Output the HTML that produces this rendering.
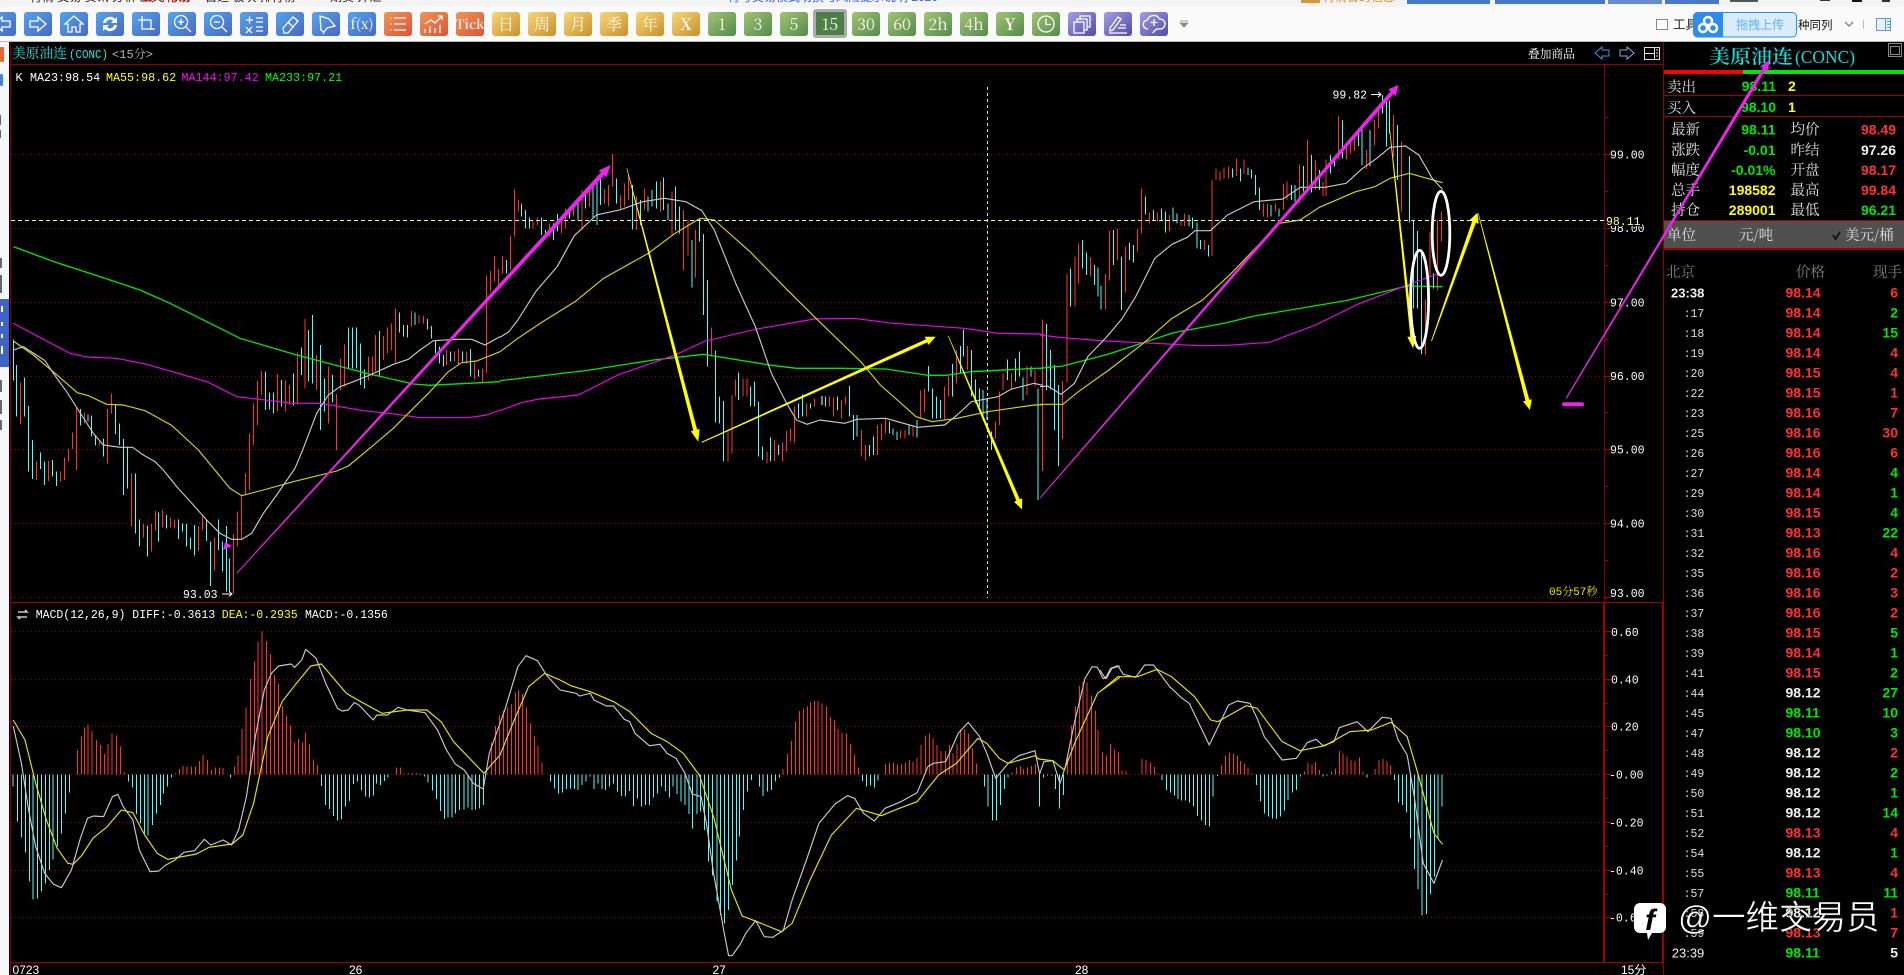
<!DOCTYPE html>
<html lang="zh"><head><meta charset="utf-8"><title>美原油连(CONC)</title>
<style>
html,body{margin:0;padding:0;background:#000;overflow:hidden}
svg{display:block;position:absolute;left:0;top:0}
text{white-space:pre}
.m{font-family:"Liberation Mono","Noto Serif CJK SC",monospace}
.c{font-family:"Noto Serif CJK SC","Liberation Serif",serif}
.s{font-family:"Liberation Sans","Noto Sans CJK SC",sans-serif}
.n{font-family:"Liberation Sans",sans-serif;font-weight:bold;font-size:14px}
.ax{font-family:"Liberation Mono",monospace;font-size:11.5px;fill:#fff}
.b{vector-effect:non-scaling-stroke;stroke-width:1;fill:none;shape-rendering:crispEdges}
.l{vector-effect:non-scaling-stroke;stroke-width:1.15;fill:none;stroke-linejoin:round}
.r{stroke:#ff3232}.k{stroke:#54fcfc}
.fr{fill:#ff3232}.fg{fill:#00e800}.fw{fill:#f0f0f0}.fy{fill:#ffff00}
.ma1{stroke:#c8c8c8}.ma2{stroke:#d6d600}.ma3{stroke:#f000f0}.ma4{stroke:#00e800;stroke-width:1.3}
.ic{fill:none;stroke:#fff;stroke-width:1.3}
.bt{font-family:"Noto Serif CJK SC","Liberation Serif",serif;font-size:16px;text-anchor:middle;fill:#fbf6e8}
.t{font-family:"Liberation Mono",monospace;font-size:11.5px;fill:#ddd;text-anchor:end}
.v{text-anchor:end}
.lb{font-family:"Noto Serif CJK SC",serif;font-size:14.5px;fill:#e0e0e0}
</style></head>
<body>
<svg width="1904" height="975" viewBox="0 0 1904 975" xmlns="http://www.w3.org/2000/svg">
<defs>
<linearGradient id="gb" x1="0" y1="0" x2="1" y2="1"><stop offset="0" stop-color="#52a4f2"/><stop offset="1" stop-color="#4a68bc"/></linearGradient>
<linearGradient id="go" x1="0" y1="0" x2="1" y2="1"><stop offset="0" stop-color="#f09558"/><stop offset="1" stop-color="#dc5436"/></linearGradient>
<linearGradient id="gy" x1="0" y1="0" x2="1" y2="1"><stop offset="0" stop-color="#f8d878"/><stop offset="1" stop-color="#c98f2c"/></linearGradient>
<linearGradient id="gg" x1="0" y1="0" x2="1" y2="1"><stop offset="0" stop-color="#a2c474"/><stop offset="1" stop-color="#558a4e"/></linearGradient>
<linearGradient id="gp" x1="0" y1="0" x2="1" y2="1"><stop offset="0" stop-color="#a49ee4"/><stop offset="1" stop-color="#4e4ca6"/></linearGradient>
</defs>

<!-- chrome -->
<rect width="1904" height="975" fill="#000"/>
<rect width="1904" height="41" fill="#fafafa"/>
<rect width="1904" height="7" fill="#f4f4f4"/>
<rect y="41" width="1904" height="1" fill="#b8b8b8"/>
<g font-size="12" class="s">
<text x="30" y="1" fill="#222">行情 交易 资讯 分析 工具 帮助</text>
<text x="142" y="1" fill="#e00000">实时行情 </text>
<text x="205" y="1" fill="#222">自选 板块 排行榜</text>
<text x="330" y="1" fill="#222">期货 外汇</text>
<text x="728" y="1" fill="#2a62e0">符号交易模式切换与风险提示说明 2020</text>
<text x="1323" y="1" fill="#d88a20">行情合约信息</text>
</g>
<rect x="1301" y="0" width="19" height="3" fill="#d89a40"/>
<rect x="1407" y="0" width="83" height="4" fill="#4a78c8"/>
<rect x="1495" y="0" width="110" height="4" fill="#4a78c8"/>
<rect x="1608" y="0" width="54" height="4" fill="#6a8ad0"/>
<rect x="1665" y="0" width="54" height="4" fill="#4a78c8"/>
<rect x="1730" y="0" width="28" height="2" fill="#555"/>
<rect x="1820" y="0" width="10" height="1" fill="#333"/><rect x="1852" y="0" width="10" height="2" fill="#111"/><rect x="1882" y="0" width="8" height="2" fill="#333"/>

<!-- toolbar buttons -->
<g>
<g transform="translate(-12,12)"><rect width="28" height="24" rx="3" fill="url(#gb)"/><path class="ic" d="M22 9h-8V5l-8 7 8 7v-4h8z"/></g>
<g transform="translate(24,12)"><rect width="28" height="24" rx="3" fill="url(#gb)"/><path class="ic" d="M6 9h8V5l8 7-8 7v-4H6z"/></g>
<g transform="translate(60,12)"><rect width="28" height="24" rx="3" fill="url(#gb)"/><path class="ic" d="M14 4L5 12h3v8h4v-5h4v5h4v-8h3z"/></g>
<g transform="translate(96,12)"><rect width="28" height="24" rx="3" fill="url(#gb)"/><path fill="#fff" d="M7 11a7 7 0 0 1 12-4l2-2v6h-6l2-2a4 4 0 0 0-7 2zM21 13a7 7 0 0 1-12 4l-2 2v-6h6l-2 2a4 4 0 0 0 7-2z"/></g>
<g transform="translate(132,12)"><rect width="28" height="24" rx="3" fill="url(#gb)"/><path class="ic" d="M6 8h13v10M10 4v13h13"/></g>
<g transform="translate(168,12)"><rect width="28" height="24" rx="3" fill="url(#gb)"/><circle class="ic" cx="13" cy="10" r="6.500"/><path class="ic" d="M18 15l5 5M10 10h6M13 7v6"/></g>
<g transform="translate(204,12)"><rect width="28" height="24" rx="3" fill="url(#gb)"/><circle class="ic" cx="13" cy="10" r="6.500"/><path class="ic" d="M18 15l5 5M10 10h6"/></g>
<g transform="translate(240,12)"><rect width="28" height="24" rx="3" fill="url(#gb)"/><path class="ic" d="M6 8h7M9.500 4.500v7M16 6h7M16 10h7M6 15l6 6M12 15l-6 6M16 15h7M16 19h7"/></g>
<g transform="translate(276,12)"><rect width="28" height="24" rx="3" fill="url(#gb)"/><path class="ic" d="M7 16L17 5l5 4-10 12H8zM12 10l5 5"/></g>
<g transform="translate(312,12)"><rect width="28" height="24" rx="3" fill="url(#gb)"/><path class="ic" d="M8 4l9 3 6 7-8 2-3 4-3-2zM11 20l1 2"/></g>
<g transform="translate(348,12)"><rect width="28" height="24" rx="3" fill="url(#gb)"/><text x="14" y="17" font-size="14" class="c" text-anchor="middle" fill="#fff">f(x)</text></g>
<g transform="translate(384,12)"><rect width="28" height="24" rx="3" fill="url(#go)"/><path class="ic" d="M10 6h12M10 12h12M10 18h12M6 6h1.500M6 12h1.500M6 18h1.500"/></g>
<g transform="translate(420,12)"><rect width="28" height="24" rx="3" fill="url(#go)"/><path class="ic" d="M5 21v-4M10 21v-7M15 21v-5M20 21v-8M5 12l6-4 4 3 7-7M18 4h4v4"/></g>
<g transform="translate(456,12)"><rect width="28" height="24" rx="3" fill="url(#go)"/><text x="14" y="17" font-size="13" font-weight="bold" class="c" text-anchor="middle" fill="#f7e6d8">Tick</text></g>
<g transform="translate(492,12)"><rect width="28" height="24" rx="3" fill="url(#gy)"/><text x="14" y="18" class="bt">日</text></g>
<g transform="translate(528,12)"><rect width="28" height="24" rx="3" fill="url(#gy)"/><text x="14" y="18" class="bt">周</text></g>
<g transform="translate(564,12)"><rect width="28" height="24" rx="3" fill="url(#gy)"/><text x="14" y="18" class="bt">月</text></g>
<g transform="translate(600,12)"><rect width="28" height="24" rx="3" fill="url(#gy)"/><text x="14" y="18" class="bt">季</text></g>
<g transform="translate(636,12)"><rect width="28" height="24" rx="3" fill="url(#gy)"/><text x="14" y="18" class="bt">年</text></g>
<g transform="translate(672,12)"><rect width="28" height="24" rx="3" fill="url(#gy)"/><text x="14" y="18" class="bt" font-size="18" font-weight="bold">X</text></g>
<g transform="translate(708,12)"><rect width="28" height="24" rx="3" fill="url(#gg)"/><text x="14" y="18" class="bt">1</text></g>
<g transform="translate(744,12)"><rect width="28" height="24" rx="3" fill="url(#gg)"/><text x="14" y="18" class="bt">3</text></g>
<g transform="translate(780,12)"><rect width="28" height="24" rx="3" fill="url(#gg)"/><text x="14" y="18" class="bt">5</text></g>
<g transform="translate(813,9)"><rect x="0" y="0" width="34" height="29" rx="3" fill="#ababab"/><rect x="3" y="3" width="28" height="23" fill="#4e7f47"/><text x="17" y="21" class="bt">15</text></g>
<g transform="translate(852,12)"><rect width="28" height="24" rx="3" fill="url(#gg)"/><text x="14" y="18" class="bt">30</text></g>
<g transform="translate(888,12)"><rect width="28" height="24" rx="3" fill="url(#gg)"/><text x="14" y="18" class="bt">60</text></g>
<g transform="translate(924,12)"><rect width="28" height="24" rx="3" fill="url(#gg)"/><text x="14" y="18" class="bt">2h</text></g>
<g transform="translate(960,12)"><rect width="28" height="24" rx="3" fill="url(#gg)"/><text x="14" y="18" class="bt">4h</text></g>
<g transform="translate(996,12)"><rect width="28" height="24" rx="3" fill="url(#gg)"/><text x="14" y="18" class="bt" font-size="18" font-weight="bold">Y</text></g>
<g transform="translate(1032,12)"><rect width="28" height="24" rx="3" fill="url(#gg)"/><circle class="ic" cx="14" cy="12" r="8"/><path class="ic" d="M14 6.500v6h5"/></g>
<g transform="translate(1068,12)"><rect width="28" height="24" rx="3" fill="url(#gp)"/><path class="ic" d="M6 10h10v11H6zM9 10V7h10v11h-3M12 7V4h10v11h-3"/></g>
<g transform="translate(1104,12)"><rect width="28" height="24" rx="3" fill="url(#gp)"/><path class="ic" d="M6 16L14 5l3 2-8 11-3 1zM5 21h18M14 16h8M16 13h6"/></g>
<g transform="translate(1140,12)"><rect width="28" height="24" rx="3" fill="url(#gp)"/><path class="ic" d="M8 17a4.500 4.500 0 0 1-.500-9 6.500 6.500 0 0 1 12-1 5 5 0 0 1 1 10h-4l-4 4"/><path class="ic" d="M14 7v7M10.500 10.500h7"/></g>
<path d="M1180 21h8M1180 23h8l-4 4z" fill="#888" stroke="#888" stroke-width=".8"/>
</g>

<!-- right toolbar -->
<rect x="1656.500" y="19.500" width="11" height="10" fill="#fff" stroke="#888"/>
<text x="1673" y="29" font-size="12.500" class="s" fill="#222">工具</text>
<rect x="1693.500" y="12.500" width="103" height="24.500" rx="4" fill="#d8ecfb" stroke="#2d8cf0"/>
<path d="M1697.500 12.500h25.500v24.500h-25.500a4 4 0 0 1-4-4v-16.500a4 4 0 0 1 4-4z" fill="#2d8cf0"/>
<circle cx="1708" cy="21" r="4" fill="none" stroke="#fff" stroke-width="2.500"/><circle cx="1703" cy="28" r="4" fill="none" stroke="#fff" stroke-width="2.500"/><circle cx="1713" cy="28" r="4" fill="none" stroke="#fff" stroke-width="2.500"/>
<text x="1736" y="29" font-size="12" class="s" fill="#6ab0ee">拖拽上传</text>
<text x="1798" y="29" font-size="11.500" class="s" fill="#111">种同列</text>
<path d="M1845 22l4 4 4-4" fill="none" stroke="#888" stroke-width="1.500"/>
<rect x="1863" y="20" width="1" height="9" fill="#bbb"/>
<rect x="1876.500" y="18.500" width="14" height="12" fill="#e8f2fc" stroke="#5a9be0"/><path d="M1885.500 18.500v12M1887 21.500h3M1887 24.500h3M1887 27.500h3" stroke="#5a9be0" fill="none"/>

<!-- left strip -->
<rect x="0" y="42" width="9" height="933" fill="#f5f5fa"/>
<rect x="0" y="47" width="4" height="15" rx="1" fill="#e2683a"/>
<rect x="0" y="74" width="3" height="12" rx="1" fill="#4a80d8"/>
<rect x="0" y="299" width="9" height="68" fill="#3f64c6"/>
<path d="M1 306h2v6H1zM1 322h2v4H1zM1 334h2v4H1zM1 346h2v8H1z" fill="#fff"/>
<path d="M0 258h2v10H0zM0 275h2v18H0zM0 380h2v12H0zM0 400h2v14H0zM0 420h2v10H0zM0 115h1v10H0zM0 130h1v8H0z" fill="#667"/>

<!-- chart frames -->
<g shape-rendering="crispEdges">
<rect x="10" y="42" width="1" height="933" fill="#8a0000"/>
<rect x="10" y="64" width="1654" height="1" fill="#8f0000"/>
<rect x="1604" y="64" width="1" height="538" fill="#800000"/>
<rect x="1663" y="42" width="1" height="933" fill="#900000"/>
<rect x="10" y="602" width="1654" height="1" fill="#a00000"/>
<rect x="10" y="962" width="1654" height="1" fill="#a00000"/>
<rect x="1603" y="602" width="2" height="360" fill="#a00000"/>
<rect x="1662" y="602" width="2" height="360" fill="#a00000"/>
<path d="M11 154.500H1604M11 228.500H1604M11 302.500H1604M11 376.500H1604M11 449.500H1604M11 523.500H1604M11 597.500H1604" stroke="#a00000" stroke-dasharray="1 3" fill="none"/>
<path d="M11 631.500H1603M11 679.500H1603M11 726.500H1603M11 774.500H1603M11 822.500H1603M11 870.500H1603M11 917.500H1603" stroke="#a00000" stroke-dasharray="1 3" fill="none"/>
<path d="M1605 154.500h6M1605 228.500h6M1605 302.500h6M1605 376.500h6M1605 449.500h6M1605 523.500h6M1605 597.500h6M1605 117.500h3M1605 191.500h3M1605 265.500h3M1605 339.500h3M1605 412.500h3M1605 486.500h3M1605 560.500h3" stroke="#a00000" fill="none"/>
<path d="M1605 631.500h6M1605 679.500h6M1605 726.500h6M1605 774.500h6M1605 822.500h6M1605 870.500h6M1605 917.500h6M1605 655.500h3M1605 703.500h3M1605 750.500h3M1605 798.500h3M1605 846.500h3M1605 894.500h3" stroke="#a00000" fill="none"/>
<path d="M987.500 87V598" stroke="#ddd" stroke-dasharray="3 3" fill="none"/>
</g>

<!-- candles part 1 -->
<g transform="translate(0,240) scale(.33333)">
<path class="b k" d="M40 298V422M50 375V530M73 412V530M85 498V695M97 600V717M121 637V687M133 665V735M157 660V710M169 695V738M241 507V557M264 523V545M275 527V590M287 585V617M311 595V650M346 495V582M358 550V615M370 597V765M382 620V745M406 700V880M418 838V920M442 857V950M476 818V905M499 825V865M535 838V897M547 850V875M559 852V920M571 893V927M583 855V947M619 838V903M631 905V1038M655 838V930M667 905V995M679 858V1055M689 955V1055M797 395V510M809 458V508M821 457V520M845 420V500M881 400V497M905 323V405M926 270V425M938 225V430M962 315V570M974 415V515M998 405V487M1046 262V385M1058 262V385M1070 262V385M1082 310V435M1094 388V445M1138 273V410M1199 218V278M1210 255V290M1222 255V293M1245 218V255M1282 237V268M1294 258V295M1306 300V340M1318 320V370M1330 345V380M1352 335V365M1387 335V365M1411 327V410M1435 388V410"/>
<path class="b r" d="M62 427V552M109 665V720M145 663V723M181 695V725M193 652V720M205 627V665M217 578V627M229 503V692M253 517V550M299 605V615M322 507V670M334 460V520M394 700V860M430 852V893M454 852V935M466 813V872M488 810V862M511 833V863M523 838V865M595 858V933M607 825V870M643 893V993M701 882V1060M713 815V920M725 765V900M737 700V765M749 580V750M761 490V615M773 423V555M785 393V465M833 402V515M857 422V515M869 435V495M893 337V490M915 237V445M950 345V450M986 380V550M1010 462V632M1022 355V450M1034 313V440M1106 350V422M1118 350V408M1126 285V395M1150 288V360M1162 262V340M1174 250V330M1187 205V367M1234 213V260M1257 225V250M1270 228V250M1340 330V377M1363 335V365M1375 327V377M1399 335V370M1423 367V418M1447 385V430M1459 107V397M1471 93V155M1483 48V125M1495 87V135"/>
</g>
<!-- candles part 2 -->
<g transform="translate(500,140) scale(.35714,.33333)">
<path class="b k" d="M18 360V400M60 190V230M71 210V265M82 232V265M116 232V285M127 270V290M150 250V300M161 222V275M195 205V235M218 180V240M240 165V205M260 135V235M271 125V255M282 118V195M326 115V190M371 135V268M393 180V255M415 170V215M426 150V200M438 125V205M458 112V210M470 190V240M492 140V272M503 200V280M537 300V443M559 235V305M570 282V525M581 420V680M603 632V848M615 770V850M626 783V965M668 697V780M702 740V800M713 725V800M724 785V950M735 920V960M758 892V965M780 915V945M836 790V835M847 763V830M869 790V805M912 770V800M945 770V810M978 738V830M990 825V900M1000 825V890M1035 915V950M1046 890V945M1090 845V880M1100 865V885M1111 875V900M1145 855V885M1167 840V893M1200 678V755M1211 745V835M1222 770V835M1233 780V835M1267 672V770M1289 618V700M1298 568V650M1320 630V770M1331 718V790M1342 745V800M1353 750V840M1364 775V840M1376 875V930M1421 658V720M1443 655V725M1454 635V710M1465 712V782M1487 680V710M1507 745V1080"/>
<path class="b r" d="M7 348V400M29 288V390M41 148V290M52 180V215M93 243V265M105 232V255M139 250V290M172 240V280M184 205V265M206 190V230M229 150V270M250 140V200M293 147V190M304 135V200M315 42V140M338 165V210M349 130V200M360 105V180M382 170V270M404 145V210M449 125V215M481 155V285M514 210V390M526 240V347M548 270V412M592 562V650M638 870V965M649 765V940M660 718V770M680 715V770M691 715V770M747 935V970M769 900V965M791 908V965M802 873V935M814 865V905M825 800V908M858 790V830M880 775V800M923 770V800M934 772V830M956 780V835M967 770V793M1012 870V950M1023 915V962M1057 855V945M1068 850V900M1079 835V880M1122 872V895M1134 870V895M1156 855V890M1178 752V835M1189 745V815M1245 740V840M1256 710V770M1278 630V730M1309 618V690M1387 845V895M1398 755V855M1409 700V750M1432 700V745M1476 678V765M1498 688V740"/>
<path class="b" stroke="#fff" d="M901 768V795"/>
</g>
<!-- candles part 3 -->
<g transform="translate(1040,70) scale(.38265,.33333)">
<path class="b k" d="M17 762V960M28 840V958M38 885V1080M48 945V1188M80 595V710M111 510V595M122 547V615M143 585V645M152 592V680M160 648V718M192 480V585M213 560V720M234 517V570M245 525V578M276 380V433M296 420V450M317 415V450M328 425V488M348 412V455M358 430V460M389 435V470M399 442V475M410 457V535M420 510V537M440 525V560M503 295V322M524 295V335M543 293V315M553 298V325M563 315V375M574 352V420M604 405V440M625 415V440M657 345V390M667 345V395M688 288V365M709 255V368M730 300V360M759 255V310M769 270V290M790 150V265M832 175V228M842 170V285M863 180V290M895 75V130M905 90V230M913 92V190M934 165V330M966 258V458M976 450V715M986 483V715M997 540V852M1028 610V655"/>
<path class="b r" d="M6 748V1203M59 933V1107M70 612V938M91 560V710M101 520V640M132 562V620M171 612V718M181 482V632M203 475V570M224 530V668M255 477V545M265 355V490M286 428V460M307 428V455M338 435V483M368 450V468M378 430V468M430 510V540M450 330V558M460 295V330M471 305V333M481 292V325M492 290V325M513 265V318M533 268V312M584 400V440M594 402V442M615 400V425M636 342V420M646 335V390M678 283V400M699 210V365M720 270V358M740 335V378M748 268V378M780 138V265M801 228V268M811 205V250M822 190V243M853 240V297M874 150V225M884 120V175M924 135V260M945 215V425M1007 688V855M1019 487V620M1039 450V662M1049 425V515"/>
</g>

<!-- price MAs -->
<g transform="translate(0,240) scale(.33333)">
<polyline class="l ma4" points="40,20 170,68 300,110 420,150 510,190 720,295 890,345 1100,400 1240,432 1290,436 1500,425"/>
<polyline class="l ma3" points="40,250 125,295 210,340 260,351 350,355 440,373 620,425 710,470 880,490 960,490 1090,512 1190,523 1260,533 1405,533 1460,525 1500,510"/>
<polyline class="l ma2" points="40,303 100,345 165,400 232,458 265,467 320,493 370,495 435,512 515,556 595,630 690,745 725,767 790,750 880,725 1010,693 1045,678 1115,620 1180,565 1290,455 1345,395 1385,368 1430,363 1500,335"/>
<polyline class="l ma1" points="40,330 70,320 135,362 160,400 200,455 235,510 280,580 310,615 360,622 398,622 430,645 465,665 490,690 530,740 580,795 620,840 660,880 695,898 725,898 755,880 790,820 830,765 885,685 910,625 950,520 985,465 1020,440 1060,425 1110,405 1180,373 1225,358 1260,330 1300,302 1370,298 1415,298 1455,315 1500,290"/>
</g>
<g transform="translate(500,140) scale(.35714,.33333)">
<polyline class="l ma4" points="0,722 240,692 430,660 570,643 760,676 830,685 950,685 1080,687 1200,706 1250,706 1320,695 1500,685 1520,685"/>
<polyline class="l ma3" points="0,812 60,788 110,777 220,765 330,705 490,645 575,603 720,567 880,537 990,535 1100,550 1300,565 1395,580 1510,582 1520,584"/>
<polyline class="l ma2" points="0,635 50,595 120,545 210,485 290,415 415,340 490,280 560,235 600,240 700,335 800,445 880,530 1010,665 1065,735 1165,830 1210,845 1280,835 1365,815 1495,795 1520,794"/>
<polyline class="l ma1" points="0,592 25,575 50,540 100,455 160,380 208,287 270,225 335,210 400,185 460,175 520,185 565,212 600,270 660,430 715,560 760,700 800,785 830,840 860,853 895,840 965,850 1000,838 1080,835 1170,862 1245,855 1280,825 1320,785 1395,770 1430,748 1495,730 1520,736"/>
</g>
<g transform="translate(1040,70) scale(.38265,.33333)">
<polyline class="l ma4" points="0,895 60,888 180,852 350,788 480,760 560,738 800,692 960,648 1052,650"/>
<polyline class="l ma3" points="0,795 60,803 170,813 300,820 415,827 490,826 600,817 720,765 830,703 960,645 1040,612"/>
<polyline class="l ma2" points="0,1003 60,1003 100,965 180,900 270,820 345,745 425,690 500,610 625,460 680,450 730,412 825,365 875,350 915,325 965,310 1052,338"/>
<polyline class="l ma1" points="0,950 20,948 55,973 90,940 125,860 175,800 215,745 250,680 300,565 345,523 385,502 405,482 445,482 490,435 560,395 635,387 680,352 745,352 800,340 840,298 880,265 915,232 955,228 990,255 1025,325 1052,358"/>
</g>

<!-- MACD histogram -->
<g transform="translate(0,590) scale(.35714,.33333)">
<path class="b k" d="M37 553V590M49 553V695M60 553V743M71 553V788M82 553V875M93 553V928M105 553V925M116 553V905M127 553V880M138 553V840M149 553V808M161 553V770M172 553V730M183 553V670M194 553V608M360 553V575M371 553V592M382 553V672M393 553V700M404 553V730M415 553V737M427 553V705M438 553V670M449 553V645M458 553V610M469 553V590M480 553V563M645 553V563M900 553V588M911 553V645M922 553V657M934 553V678M945 553V692M956 553V687M967 553V650M978 553V633M990 553V582M1001 553V575M1012 553V602M1024 553V620M1035 553V623M1046 553V617M1054 553V580M1065 553V585M1076 553V573M1087 553V563M1177 553V555M1188 553V560M1199 553V578M1211 553V602M1222 553V627M1233 553V663M1245 553V687M1254 553V683M1265 553V682M1276 553V670M1287 553V660M1299 553V658M1310 553V652M1321 553V660M1332 553V658M1343 553V655M1354 553V645M1541 553V575M1552 553V595M1564 553V610"/>
<path class="b r" d="M217 553V480M228 553V440M236 553V413M247 553V403M258 553V423M270 553V450M281 553V465M292 553V492M303 553V462M314 553V430M326 553V437M337 553V470M349 553V547M491 553V550M502 553V537M513 553V528M524 553V530M536 553V530M547 553V530M558 553V513M569 553V495M581 553V510M592 553V540M603 553V532M614 553V532M625 553V534M656 553V530M667 553V497M678 553V417M689 553V353M701 553V267M712 553V213M723 553V155M734 553V125M746 553V155M757 553V192M769 553V255M780 553V282M791 553V348M802 553V378M813 553V407M825 553V457M836 553V447M847 553V458M856 553V428M867 553V462M878 553V508M889 553V525M1110 553V532M1122 553V533M1133 553V550M1144 553V551M1155 553V549M1166 553V549M1365 553V550M1376 553V457M1387 553V408M1398 553V375M1410 553V362M1421 553V352M1432 553V342M1443 553V308M1452 553V300M1463 553V312M1474 553V352M1485 553V400M1496 553V440M1507 553V468M1518 553V517"/>
</g>
<g transform="translate(560,590) scale(.35714,.33333)">
<path class="b k" d="M7 553V608M18 553V597M29 553V595M40 553V597M51 553V600M62 553V585M73 553V575M84 553V560M95 553V597M106 553V580M117 553V597M128 553V600M139 553V590M150 553V580M161 553V605M172 553V618M184 553V620M195 553V603M206 553V648M217 553V625M228 553V650M239 553V645M251 553V645M262 553V622M273 553V610M284 553V590M295 553V603M306 553V622M317 553V590M328 553V612M339 553V635M350 553V645M361 553V672M371 553V716M383 553V672M394 553V665M405 553V720M416 553V815M427 553V857M439 553V935M450 553V975M461 553V1000M472 553V960M483 553V885M494 553V812M503 553V740M514 553V660M525 553V605M536 553V570M558 553V590M569 553V618M581 553V605M592 553V600M603 553V575M614 553V563M847 553V573M858 553V590M869 553V587M880 553V593M891 553V572M1188 553V590M1199 553V650M1211 553V692M1222 553V692M1233 553V645M1244 553V597M1255 553V563M1343 553V650M1354 553V563M1365 553V556M1377 553V556M1388 553V597M1399 553V656M1410 553V615"/>
<path class="b r" d="M625 553V537M637 553V492M648 553V453M659 553V395M670 553V363M682 553V355M693 553V349M701 553V337M712 553V333M723 553V333M734 553V340M746 553V350M757 553V381M768 553V390M779 553V417M790 553V427M802 553V430M813 553V462M824 553V495M836 553V533M911 553V522M922 553V517M934 553V518M945 553V523M956 553V522M967 553V518M978 553V510M989 553V516M1000 553V502M1011 553V465M1023 553V437M1034 553V430M1045 553V445M1056 553V465M1067 553V483M1079 553V483M1090 553V465M1101 553V490M1111 553V460M1122 553V418M1133 553V418M1144 553V430M1155 553V475M1166 553V520M1266 553V547M1278 553V533M1289 553V528M1298 553V537M1309 553V533M1320 553V528M1332 553V522M1421 553V500M1432 553V407M1443 553V348M1454 553V288M1465 553V275M1476 553V277M1488 553V316M1499 553V362M1507 553V420M1519 553V487M1530 553V497M1541 553V462M1552 553V478M1564 553V487"/>
</g>
<g transform="translate(1100,590) scale(.35714,.33333)">
<path class="b k" d="M174 553V570M186 553V600M197 553V607M208 553V617M219 553V627M228 553V632M239 553V632M250 553V637M262 553V650M273 553V678M284 553V692M295 553V705M306 553V710M317 553V620M329 553V558M438 553V585M449 553V635M460 553V670M472 553V680M483 553V685M494 553V687M505 553V680M516 553V662M527 553V630M539 553V607M550 553V600M561 553V560M625 553V560M636 553V556M748 553V563M825 553V570M836 553V638M847 553V645M858 553V668M869 553V745M880 553V837M891 553V897M902 553V977M914 553V972M925 553V912M936 553V860M947 553V745M958 553V650"/>
<path class="b r" d="M62 553V541M73 553V543M118 553V507M129 553V510M141 553V517M152 553V531M163 553V551M340 553V525M351 553V497M362 553V487M374 553V492M385 553V497M393 553V513M404 553V520M415 553V533M426 553V550M572 553V545M583 553V518M594 553V524M603 553V516M614 553V540M648 553V545M659 553V535M670 553V483M681 553V490M692 553V500M703 553V510M714 553V513M726 553V503M737 553V545M770 553V537M781 553V510M792 553V507M803 553V513M814 553V527"/>
</g>

<!-- MACD lines -->
<g transform="translate(0,590) scale(.35714,.33333)">
<polyline class="l ma1" points="37,408 60,520 80,660 100,770 125,850 150,883 172,893 200,840 225,745 245,685 262,678 290,680 315,620 330,613 345,650 372,690 390,780 420,845 445,843 460,828 490,810 515,787 545,782 572,748 590,765 625,750 648,765 668,720 690,620 715,440 740,300 760,250 780,228 815,222 825,232 845,210 856,178 885,205 912,280 945,355 958,363 975,360 992,338 1005,345 1045,390 1055,375 1085,375 1115,352 1140,360 1190,368 1225,420 1250,480 1275,522 1300,540 1325,580 1353,597 1370,490 1415,355 1450,230 1473,197 1505,212 1530,255 1568,300"/>
<polyline class="l" stroke="#e6e600" points="37,390 70,450 100,580 130,690 160,775 190,820 205,823 230,795 260,745 300,710 340,660 372,668 405,735 440,790 470,808 550,792 585,772 650,762 680,735 710,640 750,440 790,335 830,280 870,228 900,222 930,260 970,310 1010,335 1070,370 1140,360 1195,360 1235,395 1270,455 1355,550 1400,495 1440,390 1480,290 1525,250 1568,270"/>
</g>
<g transform="translate(560,590) scale(.35714,.33333)">
<polyline class="l ma1" points="0,300 45,310 55,318 85,310 95,330 130,348 150,348 180,388 195,395 210,430 250,467 280,463 300,490 325,505 350,550 370,612 395,620 410,700 430,850 460,1030 472,1097 482,1097 505,1062 520,1030 548,992 572,1040 595,1042 625,1022 650,930 690,810 725,700 770,642 805,617 825,625 850,670 880,693 910,655 955,635 1000,608 1030,530 1045,520 1080,515 1115,430 1143,397 1175,440 1195,490 1220,565 1255,520 1285,497 1330,482 1343,552 1355,515 1380,512 1400,580 1415,530 1440,400 1470,265 1490,230 1505,232 1520,265 1530,265 1545,235 1568,228"/>
<polyline class="l" stroke="#e6e600" points="0,270 30,287 85,305 150,335 195,365 255,430 300,455 345,490 390,555 430,680 480,900 510,978 545,992 620,1025 650,1000 700,870 760,735 830,655 900,677 950,655 1000,635 1060,555 1110,520 1170,445 1195,460 1230,505 1255,520 1330,497 1340,507 1380,512 1412,540 1445,450 1505,310 1568,262"/>
</g>
<g transform="translate(1100,590) scale(.35714,.33333)">
<polyline class="l ma1" points="0,240 15,265 30,235 50,227 65,253 100,262 125,225 150,225 195,290 230,325 250,340 306,465 360,345 385,333 420,340 440,385 460,440 510,510 550,505 580,458 605,448 625,467 655,455 670,413 720,395 750,425 790,382 815,385 835,450 860,495 880,620 905,820 935,880 959,810"/>
<polyline class="l" stroke="#e6e600" points="0,305 50,260 105,260 160,238 200,260 265,320 310,390 330,395 410,347 440,355 510,455 560,482 630,467 700,425 760,420 815,397 860,440 890,550 935,730 959,763"/>
</g>

<!-- current price line -->
<path d="M11 220.500H1606" stroke="#ffff80" stroke-dasharray="4 3" fill="none" shape-rendering="crispEdges"/>

<!-- chart header text -->
<text x="12" y="58" class="c" font-size="14" fill="#22e8e8" textLength="55" lengthAdjust="spacingAndGlyphs">美原油连</text>
<text x="69" y="58" class="m" font-size="11.500" fill="#22e8e8" textLength="39" lengthAdjust="spacingAndGlyphs">(CONC)</text>
<text x="112" y="58" class="m" font-size="12" fill="#b0b0b0" textLength="41" lengthAdjust="spacingAndGlyphs">&lt;15分&gt;</text>
<g class="m" font-size="11.700">
<text x="15.500" y="81" fill="#fff">K</text>
<text x="30" y="81" fill="#fff">MA23:98.54</text>
<text x="106" y="81" fill="#ffff00">MA55:98.62</text>
<text x="181.500" y="81" fill="#ff00ff">MA144:97.42</text>
<text x="265" y="81" fill="#00ff00">MA233:97.21</text>
</g>
<text x="1528" y="58" class="c" font-size="11.700" fill="#fff">叠加商品</text>
<path d="M1595 53l7-6v3h7v6h-7v3z" fill="#000" stroke="#4a90e0"/>
<path d="M1634 53l-7-6v3h-7v6h7v3z" fill="#000" stroke="#88a8d8"/>
<rect x="1644.500" y="47.500" width="15" height="12" fill="none" stroke="#e0e0e0"/><path d="M1644.500 53.500h10M1654.500 47.500v12M1656 50h2M1656 53h2M1656 56h2" stroke="#e0e0e0" fill="none"/>

<!-- labels -->
<g class="ax">
<text x="1610" y="158.500">99.00</text>
<text x="1610" y="232">98.00</text>
<text x="1610" y="306.500">97.00</text>
<text x="1610" y="380">96.00</text>
<text x="1610" y="453.500">95.00</text>
<text x="1610" y="527.500">94.00</text>
<text x="1610" y="597">93.00</text>
<rect x="1606" y="215" width="36" height="11" fill="#000"/>
<text x="1606" y="225" fill="#ffff90">98.11</text>
<text x="1611" y="636">0.60</text>
<text x="1611" y="683.500">0.40</text>
<text x="1611" y="730.500">0.20</text>
<text x="1609" y="778.500">-0.00</text>
<text x="1609" y="826.500">-0.20</text>
<text x="1609" y="874.500">-0.40</text>
<text x="1609" y="921.500">-0.60</text>
<text x="183" y="598">93.03</text>
<text x="1332.500" y="98.500">99.82</text>
</g>
<path d="M222 594h10M229 591.500l3 2.500-3 2.500M1371 94.500h10M1378 92l3 2.500-3 2.500" stroke="#fff" fill="none"/>
<text x="1549" y="595" class="m" font-size="11" fill="#e8e800">05分57秒</text>
<path d="M18 612h9l-2-2M27 617h-9l2 2" stroke="#c8c8c8" stroke-width="1.600" fill="none"/>
<g class="m" font-size="11.500">
<text x="35.700" y="618" fill="#fff">MACD(12,26,9) DIFF:-0.3613</text>
<text x="221.800" y="618" fill="#ffff00">DEA:-0.2935</text>
<text x="305" y="618" fill="#fff">MACD:-0.1356</text>
</g>
<g class="s" font-size="12" fill="#fff">
<text x="12.500" y="974">0723</text><text x="349" y="974">26</text><text x="712.500" y="974">27</text><text x="1075" y="974">28</text>
<text x="1621" y="974">15分</text>
</g>

<!-- right panel -->
<text x="1709" y="63" class="c" font-size="19" font-weight="600" fill="#12dcdc" textLength="84" lengthAdjust="spacingAndGlyphs">美原油连</text>
<text x="1795" y="63" font-family="Liberation Serif,serif" font-size="17.500" fill="#12dcdc" textLength="60" lengthAdjust="spacingAndGlyphs">(CONC)</text>
<rect x="1888.500" y="43.500" width="13" height="13" fill="none" stroke="#888"/><rect x="1890.500" y="46.500" width="9" height="8" fill="none" stroke="#888"/>
<rect x="1664" y="70" width="79" height="4" fill="#ff0000"/><rect x="1743" y="70" width="161" height="4" fill="#00e800"/>
<g shape-rendering="crispEdges" fill="#a00000"><rect x="1664" y="95" width="240" height="1"/><rect x="1664" y="116" width="240" height="1"/><rect x="1664" y="220" width="240" height="1"/></g>
<text x="1667" y="92" class="lb" font-size="15">卖出</text>
<text x="1667" y="113" class="lb" font-size="15">买入</text>
<text x="1776" y="91" class="n fg v">98.11</text><text x="1788" y="91" class="n fy">2</text>
<text x="1776" y="112" class="n fg v">98.10</text><text x="1788" y="112" class="n fy">1</text>
<g>
<text x="1671" y="134.500" class="lb">最新</text><text x="1775.500" y="134.500" class="n fg v">98.11</text><text x="1790.500" y="134.500" class="lb">均价</text><text x="1896" y="134.500" class="n fr v">98.49</text>
<text x="1671" y="155" class="lb">涨跌</text><text x="1775.500" y="155" class="n fg v">-0.01</text><text x="1790.500" y="155" class="lb">昨结</text><text x="1896" y="155" class="n fw v">97.26</text>
<text x="1671" y="175" class="lb">幅度</text><text x="1775.500" y="175" class="n fg v">-0.01%</text><text x="1790.500" y="175" class="lb">开盘</text><text x="1896" y="175" class="n fr v">98.17</text>
<text x="1671" y="195" class="lb">总手</text><text x="1775.500" y="195" class="n fy v">198582</text><text x="1790.500" y="195" class="lb">最高</text><text x="1896" y="195" class="n fr v">99.84</text>
<text x="1671" y="215" class="lb">持仓</text><text x="1775.500" y="215" class="n fy v">289001</text><text x="1790.500" y="215" class="lb">最低</text><text x="1896" y="215" class="n fg v">96.21</text>
</g>
<rect x="1664" y="221" width="240" height="27" fill="#505050"/>
<rect x="1664" y="248" width="240" height="2" fill="#a00000"/>
<text x="1667" y="240" class="lb" font-size="14.500">单位</text>
<text x="1739" y="240" class="lb">元/吨</text>
<path d="M1833 235l2.500 4 4.500-7" stroke="#111" stroke-width="1.800" fill="none"/>
<text x="1845" y="240" class="lb">美元/桶</text>

<g class="lb" font-size="14">
<text x="1666" y="277" style="fill:#808080">北京</text><text x="1796" y="277" style="fill:#808080">价格</text><text x="1873" y="277" style="fill:#808080">现手</text>
</g>

<text x="1704.300" y="297.500" font-family="Liberation Sans" font-weight="bold" font-size="13" fill="#f0f0f0" text-anchor="end">23:38</text>
<text x="1785.500" y="297.500" class="n fr">98.14</text><text x="1898" y="297.500" class="n fr v">6</text>
<text x="1704.300" y="317" class="t">:17</text><text x="1785.500" y="317.500" class="n fr">98.14</text><text x="1898" y="317.500" class="n fg v">2</text>
<text x="1704.300" y="337" class="t">:18</text><text x="1785.500" y="337.500" class="n fr">98.14</text><text x="1898" y="337.500" class="n fg v">15</text>
<text x="1704.300" y="357" class="t">:19</text><text x="1785.500" y="357.500" class="n fr">98.14</text><text x="1898" y="357.500" class="n fr v">4</text>
<text x="1704.300" y="377" class="t">:20</text><text x="1785.500" y="377.500" class="n fr">98.15</text><text x="1898" y="377.500" class="n fr v">4</text>
<text x="1704.300" y="397" class="t">:22</text><text x="1785.500" y="397.500" class="n fr">98.15</text><text x="1898" y="397.500" class="n fr v">1</text>
<text x="1704.300" y="417" class="t">:23</text><text x="1785.500" y="417.500" class="n fr">98.16</text><text x="1898" y="417.500" class="n fr v">7</text>
<text x="1704.300" y="437" class="t">:25</text><text x="1785.500" y="437.500" class="n fr">98.16</text><text x="1898" y="437.500" class="n fr v">30</text>
<text x="1704.300" y="457" class="t">:26</text><text x="1785.500" y="457.500" class="n fr">98.16</text><text x="1898" y="457.500" class="n fr v">6</text>
<text x="1704.300" y="477" class="t">:27</text><text x="1785.500" y="477.500" class="n fr">98.14</text><text x="1898" y="477.500" class="n fg v">4</text>
<text x="1704.300" y="497" class="t">:29</text><text x="1785.500" y="497.500" class="n fr">98.14</text><text x="1898" y="497.500" class="n fg v">1</text>
<text x="1704.300" y="517" class="t">:30</text><text x="1785.500" y="517.500" class="n fr">98.15</text><text x="1898" y="517.500" class="n fg v">4</text>
<text x="1704.300" y="537" class="t">:31</text><text x="1785.500" y="537.500" class="n fr">98.13</text><text x="1898" y="537.500" class="n fg v">22</text>
<text x="1704.300" y="557" class="t">:32</text><text x="1785.500" y="557.500" class="n fr">98.16</text><text x="1898" y="557.500" class="n fr v">4</text>
<text x="1704.300" y="577" class="t">:35</text><text x="1785.500" y="577.500" class="n fr">98.16</text><text x="1898" y="577.500" class="n fr v">2</text>
<text x="1704.300" y="597" class="t">:36</text><text x="1785.500" y="597.500" class="n fr">98.16</text><text x="1898" y="597.500" class="n fr v">3</text>
<text x="1704.300" y="617" class="t">:37</text><text x="1785.500" y="617.500" class="n fr">98.16</text><text x="1898" y="617.500" class="n fr v">2</text>
<text x="1704.300" y="637" class="t">:38</text><text x="1785.500" y="637.500" class="n fr">98.15</text><text x="1898" y="637.500" class="n fg v">5</text>
<text x="1704.300" y="657" class="t">:39</text><text x="1785.500" y="657.500" class="n fr">98.14</text><text x="1898" y="657.500" class="n fg v">1</text>
<text x="1704.300" y="677" class="t">:41</text><text x="1785.500" y="677.500" class="n fr">98.15</text><text x="1898" y="677.500" class="n fg v">2</text>
<text x="1704.300" y="697" class="t">:44</text><text x="1785.500" y="697.500" class="n fw">98.12</text><text x="1898" y="697.500" class="n fg v">27</text>
<text x="1704.300" y="717" class="t">:45</text><text x="1785.500" y="717.500" class="n fg">98.11</text><text x="1898" y="717.500" class="n fg v">10</text>
<text x="1704.300" y="737" class="t">:47</text><text x="1785.500" y="737.500" class="n fg">98.10</text><text x="1898" y="737.500" class="n fg v">3</text>
<text x="1704.300" y="757" class="t">:48</text><text x="1785.500" y="757.500" class="n fw">98.12</text><text x="1898" y="757.500" class="n fr v">2</text>
<text x="1704.300" y="777" class="t">:49</text><text x="1785.500" y="777.500" class="n fw">98.12</text><text x="1898" y="777.500" class="n fg v">2</text>
<text x="1704.300" y="797" class="t">:50</text><text x="1785.500" y="797.500" class="n fw">98.12</text><text x="1898" y="797.500" class="n fg v">1</text>
<text x="1704.300" y="817" class="t">:51</text><text x="1785.500" y="817.500" class="n fw">98.12</text><text x="1898" y="817.500" class="n fg v">14</text>
<text x="1704.300" y="837" class="t">:52</text><text x="1785.500" y="837.500" class="n fr">98.13</text><text x="1898" y="837.500" class="n fr v">4</text>
<text x="1704.300" y="857" class="t">:54</text><text x="1785.500" y="857.500" class="n fw">98.12</text><text x="1898" y="857.500" class="n fg v">1</text>
<text x="1704.300" y="877" class="t">:55</text><text x="1785.500" y="877.500" class="n fr">98.13</text><text x="1898" y="877.500" class="n fr v">4</text>
<text x="1704.300" y="897" class="t">:57</text><text x="1785.500" y="897.500" class="n fg">98.11</text><text x="1898" y="897.500" class="n fg v">11</text>
<text x="1704.300" y="917" class="t">:58</text><text x="1785.500" y="917.500" class="n fw">98.12</text><text x="1898" y="917.500" class="n fr v">1</text>
<text x="1704.300" y="937" class="t">:59</text><text x="1785.500" y="937.500" class="n fr">98.13</text><text x="1898" y="937.500" class="n fr v">7</text>
<text x="1704.300" y="957.500" font-family="Liberation Sans" font-size="13" fill="#f0f0f0" text-anchor="end">23:39</text><text x="1785.500" y="957.500" class="n fg">98.11</text><text x="1898" y="957.500" class="n fw v">5</text>

<!-- drawn annotations -->
<g fill="#ee22ee">
<polygon points="237.100,573.600 604.300,175.300 606.300,177.200 610.700,165 598.900,170.400 600.900,172.300 236.300,573"/>
<polygon points="1040.400,498.300 1393.500,93.900 1395.800,95.900 1398.600,85 1388.200,89.300 1390.500,91.300 1039.600,497.700"/>
<polygon points="1566.700,398.600 1765.700,69.500 1768.100,70.900 1769.300,60 1760.300,66.300 1762.700,67.700 1565.700,398"/>
<polygon points="223,550 232,546 225,542"/>
<rect x="1562" y="402.300" width="22" height="4" rx="2"/>
</g>
<g fill="#ffff00">
<polygon points="627.100,168.200 697.100,429.600 699.600,429 698.200,441.700 690.900,431.200 693.300,430.600 626.500,168.400"/>
<polygon points="702,442.800 927.300,342.400 928.500,344.900 935.700,336.700 924.800,336.700 925.900,339.200 701.600,441.800"/>
<polygon points="948.500,335.600 1019.800,499.400 1022.200,498.300 1022,509.300 1014,501.900 1016.400,500.800 947.900,335.800"/>
<polygon points="1389.300,123.300 1413.300,336.200 1416.300,335.900 1413.100,348.300 1407.300,336.900 1410.300,336.600 1388.700,123.300"/>
<polygon points="1431.900,341.100 1475.900,222.800 1478.700,223.800 1477.400,212.700 1469.300,220.400 1472.100,221.400 1431.100,340.900"/>
<polygon points="1478.500,213.200 1529.300,399.800 1531.800,399.200 1529.900,410 1523,401.400 1525.500,400.800 1477.900,213.400"/>
</g>
<ellipse cx="1419.600" cy="299.300" rx="9" ry="49" fill="none" stroke="#fff" stroke-width="2.800"/>
<ellipse cx="1441" cy="233.300" rx="8.800" ry="42" fill="none" stroke="#fff" stroke-width="2.800"/>

<!-- watermark -->
<path d="M1640 903h20a6 6 0 0 1 6 6v18a6 6 0 0 1-6 6h-8l-4 7-1-7h-7a6 6 0 0 1-6-6v-18a6 6 0 0 1 6-6z" fill="#fff"/>
<text x="1650" y="930" font-family="Liberation Sans" font-weight="bold" font-style="italic" font-size="30" fill="#000" text-anchor="middle">f</text>
<text x="1678" y="929" font-family="Liberation Sans,'Noto Sans CJK SC',sans-serif" font-size="33.500" fill="#fff" stroke="#000" stroke-width=".4">@<tspan font-family="'Noto Sans CJK SC',sans-serif">一维交易员</tspan></text>
</svg>
</body></html>
